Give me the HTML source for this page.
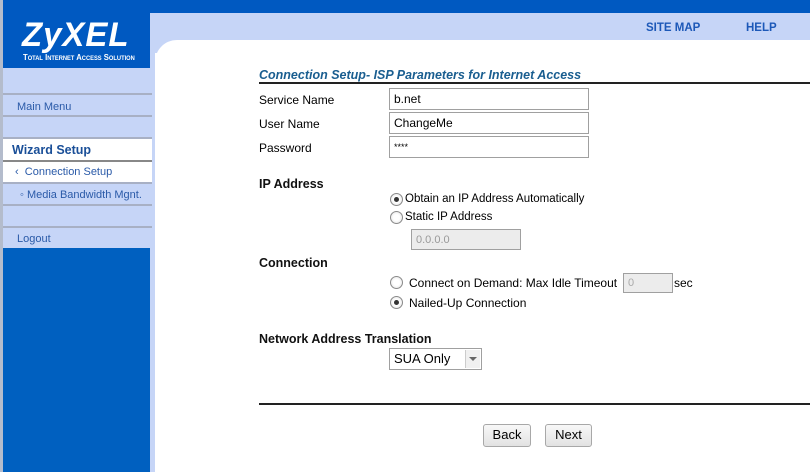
<!DOCTYPE html>
<html><head><style>
*{margin:0;padding:0;box-sizing:border-box}
body{width:810px;height:472px;overflow:hidden;background:#fff;font-family:"Liberation Sans",Arial,sans-serif;position:relative}
.a{position:absolute}
.t{font-size:12px;color:#000;white-space:nowrap}
.b{font-size:12.5px;font-weight:bold;color:#111;white-space:nowrap}
.inp{position:absolute;border:1px solid #a0a0a0;background:#fff;font-size:12px;padding:3px 4px;line-height:14px}
.row{position:absolute;left:3px;width:149px;background:#c6d5f7;border-bottom:2px solid #a8b0c4;font-size:11px;color:#2a5aa8}
.radio{position:absolute;width:13px;height:13px;border-radius:50%;border:1px solid #8a8a8a;background:radial-gradient(circle,#fff 40%,#ddd)}
.radio.on::after{content:"";position:absolute;left:3px;top:3px;width:5px;height:5px;border-radius:50%;background:#333}
.btn{position:absolute;border:1px solid #a8a8a8;border-radius:3px;background:linear-gradient(#f8f8f8,#e2e2e2);font-size:13px;text-align:center;line-height:20px}
</style></head><body>
<div class="a" style="left:0;top:0;width:3px;height:472px;background:#b4bccc"></div>
<div class="a" style="left:3px;top:0;width:807px;height:13px;background:#0059c1"></div>
<div class="a" style="left:150px;top:13px;width:660px;height:40px;background:#c6d5f7"></div>
<div class="a" style="left:155px;top:40px;width:655px;height:432px;background:#fff;border-top-left-radius:22px"></div>
<div class="a" style="left:150px;top:53px;width:5px;height:419px;background:#c6d5f7"></div>
<div class="a" style="left:3px;top:0;width:147px;height:68px;background:#0059c1"></div>
<div class="a" style="left:22px;top:20px;font-size:34px;font-weight:bold;font-style:italic;color:#fff;letter-spacing:1px;line-height:30px;transform:scaleX(0.97);transform-origin:left">ZyXEL</div>
<div class="a" style="left:23px;top:53px;font-size:8px;font-weight:bold;color:#fff;font-variant:small-caps;white-space:nowrap;transform:scaleX(0.96);transform-origin:left">Total Internet Access Solution</div>
<div class="a" style="left:646px;top:22px;font-size:11.5px;font-weight:bold;color:#1c58b8">SITE MAP</div>
<div class="a" style="left:746px;top:22px;font-size:11.5px;font-weight:bold;color:#1c58b8">HELP</div>

<div class="row" style="top:68px;height:27px"></div>
<div class="row" style="top:95px;height:22px;padding:6px 0 0 14px">Main Menu</div>
<div class="row" style="top:117px;height:22px"></div>
<div class="row" style="top:139px;height:23px;background:#fff;border-bottom-color:#888;font-size:12.5px;font-weight:bold;color:#1a4f98;padding:4px 0 0 9px">Wizard Setup</div>
<div class="row" style="top:162px;height:22px;background:#fff;padding:4px 0 0 12px">‹&nbsp; Connection Setup</div>
<div class="row" style="top:184px;height:22px;padding:5px 0 0 17px">◦ Media Bandwidth Mgnt.</div>
<div class="row" style="top:206px;height:22px"></div>
<div class="row" style="top:228px;height:20px;border:0;padding:5px 0 0 14px">Logout</div>
<div class="a" style="left:3px;top:248px;width:147px;height:224px;background:#0060c0"></div>

<div class="a" style="left:259px;top:68px;font-size:12.5px;font-weight:bold;font-style:italic;color:#1a5e90">Connection Setup- ISP Parameters for Internet Access</div>
<div class="a" style="left:259px;top:82px;width:551px;height:2px;background:#222"></div>
<div class="a t" style="left:259px;top:93px">Service Name</div>
<div class="a t" style="left:259px;top:117px">User Name</div>
<div class="a t" style="left:259px;top:141px">Password</div>
<div class="inp" style="left:389px;top:88px;width:200px;height:22px">b.net</div>
<div class="inp" style="left:389px;top:112px;width:200px;height:22px">ChangeMe</div>
<div class="inp" style="left:389px;top:136px;width:200px;height:22px;font-size:9px">****</div>

<div class="a b" style="left:259px;top:177px">IP Address</div>
<div class="radio on" style="left:390px;top:193px"></div>
<div class="a t" style="left:405px;top:193px;font-size:11.5px">Obtain an IP Address Automatically</div>
<div class="radio" style="left:390px;top:211px"></div>
<div class="a t" style="left:405px;top:211px;font-size:11.5px">Static IP Address</div>
<div class="inp" style="left:411px;top:229px;width:110px;height:21px;background:#ececec;color:#999;font-size:11px">0.0.0.0</div>

<div class="a b" style="left:259px;top:256px">Connection</div>
<div class="radio" style="left:390px;top:276px"></div>
<div class="a t" style="left:409px;top:276px">Connect on Demand: Max Idle Timeout</div>
<div class="inp" style="left:623px;top:273px;width:50px;height:20px;background:#ececec;color:#aaa;font-size:11px;padding-top:2px">0</div>
<div class="a t" style="left:674px;top:276px">sec</div>
<div class="radio on" style="left:390px;top:296px"></div>
<div class="a t" style="left:409px;top:296px">Nailed-Up Connection</div>

<div class="a b" style="left:259px;top:332px">Network Address Translation</div>
<div class="inp" style="left:389px;top:348px;width:93px;height:22px;font-size:13px;padding:3px 4px">SUA Only</div>
<div class="a" style="left:465px;top:350px;width:15px;height:18px;background:#f0f0f0;border-left:1px solid #ccc"></div>
<div class="a" style="left:469px;top:357px;width:0;height:0;border-left:4px solid transparent;border-right:4px solid transparent;border-top:4px solid #666"></div>

<div class="a" style="left:259px;top:403px;width:551px;height:2px;background:#222"></div>
<div class="btn" style="left:483px;top:424px;width:48px;height:23px">Back</div>
<div class="btn" style="left:545px;top:424px;width:47px;height:23px">Next</div>
</body></html>
